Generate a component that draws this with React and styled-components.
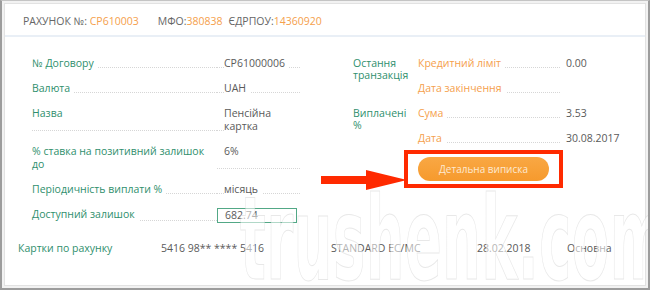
import React from 'react';
import styled, { createGlobalStyle } from 'styled-components';

const Global = createGlobalStyle`
  html, body { margin: 0; padding: 0; background: #fff; }
  body { font-family: "Open Sans", "Noto Sans", sans-serif; }
  * { box-sizing: border-box; }
`;

const GREEN = '#2f8f6d';
const ORANGE = '#f5a04c';
const GRAY = '#5a5a5a';

const Frame = styled.div`
  position: relative;
  width: 650px;
  height: 290px;
  border: 2px solid #9c9c9c;
  border-top: 1px solid #c4c4c4;
  background: #f2f2f2;
  padding: 2px;
  overflow: hidden;
`;

const Card = styled.div`
  height: 100%;
  border: 1px solid #e2e2e2;
  background: #fff;
  display: flex;
  flex-direction: column;
`;

const Header = styled.div`
  height: 33px;
  border-bottom: 2px solid #e9eff6;
  padding: 3px 0 0 18px;
  display: flex;
  align-items: center;
  font-size: 10.5px;
  color: #666;
`;

const HeadItem = styled.span`
  margin-left: ${p => p.$gap || 0}px;
  white-space: pre;
`;

const Orange = styled.span`
  color: ${ORANGE};
`;

const Body = styled.div`
  display: flex;
  padding: 6px 0 0 27px;
  font-size: 10.5px;
`;

const LeftCol = styled.div`
  width: 268px;
  display: flex;
  flex-direction: column;
`;

const Row = styled.div`
  display: grid;
  grid-template-columns: 185px 83px;
`;

const Cell = styled.div`
  display: flex;
  align-items: flex-start;
  padding-top: 14px;
  border-bottom: 1px dotted ${p => (p.$noLine ? 'transparent' : '#d6d6d6')};
  padding-left: ${p => p.$indent || 0}px;
`;

const Text = styled.span`
  background: #fff;
  line-height: 13px;
  margin-bottom: -3px;
  color: ${p => p.$color || GRAY};
  padding-right: ${p => p.$pr || 0}px;
`;

const InputBox = styled.div`
  width: 80px;
  height: 15px;
  border: 1px solid #52a886;
  background: #fff;
  color: ${GRAY};
  line-height: 13px;
  padding-left: 7px;
  margin-bottom: -3px;
`;

const RightCol = styled.div`
  margin-left: 53px;
  width: 290px;
  display: flex;
  flex-direction: column;
`;

const Group = styled.div`
  display: grid;
  grid-template-columns: 65px 1fr;
`;

const GroupLabel = styled.div`
  padding-top: 14px;
  color: ${GREEN};
  line-height: 12px;
  max-width: 56px;
`;

const SubRow = styled.div`
  display: grid;
  grid-template-columns: 142px 80px;
  column-gap: 6px;
`;

const ButtonArea = styled.div`
  margin: 7px 0 0 51px;
`;

const RedBox = styled.div`
  display: inline-flex;
  border: 4px solid #ff2a00;
  padding: 3px 10px 3px 10px;
`;

const Button = styled.button`
  width: 131px;
  height: 24px;
  border: none;
  border-radius: 12px;
  background: linear-gradient(#f9a844, #f69a2d);
  color: #fde9d2;
  font-family: "Open Sans", sans-serif;
  font-size: 10px;
  padding: 0;
`;

const CardsRow = styled.div`
  display: grid;
  grid-template-columns: 143px 170px 146px 90px 1fr;
  padding-left: 13px;
  margin-top: 21px;
  font-size: 10.5px;
  line-height: 13px;
  color: ${GRAY};
`;

const CardsLabel = styled.span`
  color: ${GREEN};
`;

const Arrow = styled.svg`
  position: absolute;
  left: 319px;
  top: 168px;
`;

const Watermark = styled.div`
  position: absolute;
  left: 238px;
  top: 180px;
  font-family: "DejaVu Sans Condensed", "DejaVu Sans", sans-serif;
  font-weight: bold;
  font-size: 116px;
  line-height: 1;
  letter-spacing: 1px;
  color: rgba(255, 255, 255, 0.55);
  -webkit-text-stroke: 1px rgba(190, 190, 190, 0.35);
  transform: scaleX(0.52);
  transform-origin: left top;
  white-space: nowrap;
  pointer-events: none;
`;

const leftRows = [
  { label: '№ Договору', value: 'СР61000006' },
  { label: 'Валюта', value: 'UAH' },
  { label: 'Назва', value: 'Пенсійна картка' },
  { label: '% ставка на позитивний залишок до', value: '6%' },
  { label: 'Періодичність виплати %', value: 'місяць' },
];

const groups = [
  {
    label: 'Остання транзакція',
    rows: [
      { label: 'Кредитний ліміт', value: '0.00' },
      { label: 'Дата закінчення', value: '' },
    ],
  },
  {
    label: 'Виплачені %',
    rows: [
      { label: 'Сума', value: '3.53' },
      { label: 'Дата', value: '30.08.2017' },
    ],
  },
];

export default function App() {
  return (
    <>
      <Global />
      <Frame>
        <Card>
          <Header>
            <HeadItem>РАХУНОК №: <Orange>СР610003</Orange></HeadItem>
            <HeadItem $gap={19}>МФО:<Orange>380838</Orange></HeadItem>
            <HeadItem $gap={6}>ЄДРПОУ:<Orange>14360920</Orange></HeadItem>
          </Header>
          <Body>
            <LeftCol>
              {leftRows.map(r => (
                <Row key={r.label}>
                  <Cell>
                    <Text $color={GREEN} $pr={4}>{r.label}</Text>
                  </Cell>
                  <Cell $indent={7}>
                    <Text $pr={4}>{r.value}</Text>
                  </Cell>
                </Row>
              ))}
              <Row>
                <Cell>
                  <Text $color={GREEN} $pr={4}>Доступний залишок</Text>
                </Cell>
                <Cell $noLine>
                  <InputBox>682.74</InputBox>
                </Cell>
              </Row>
            </LeftCol>
            <RightCol>
              {groups.map(g => (
                <Group key={g.label}>
                  <GroupLabel>{g.label}</GroupLabel>
                  <div>
                    {g.rows.map(r => (
                      <SubRow key={r.label}>
                        <Cell>
                          <Text $color={ORANGE} $pr={4}>{r.label}</Text>
                        </Cell>
                        <Cell $noLine>
                          <Text>{r.value}</Text>
                        </Cell>
                      </SubRow>
                    ))}
                  </div>
                </Group>
              ))}
              <ButtonArea>
                <RedBox>
                  <Button>Детальна виписка</Button>
                </RedBox>
              </ButtonArea>
            </RightCol>
          </Body>
          <CardsRow>
            <CardsLabel>Картки по рахунку</CardsLabel>
            <span>5416 98** **** 5416</span>
            <span>STANDARD EC/MC</span>
            <span>28.02.2018</span>
            <span>Основна</span>
          </CardsRow>
        </Card>
        <Watermark>trushenk.com</Watermark>
        <Arrow width="88" height="22" viewBox="0 0 88 22">
          <rect x="0" y="7" width="48" height="8" fill="#ff2a00" />
          <polygon points="45,1 86,11 45,21" fill="#ff2a00" />
        </Arrow>
      </Frame>
    </>
  );
}
